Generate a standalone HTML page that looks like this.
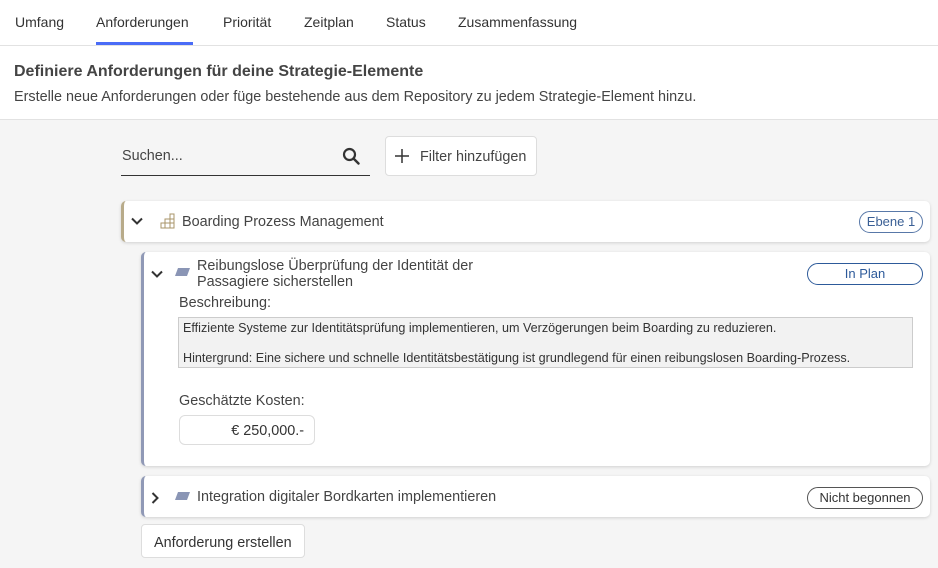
<!DOCTYPE html>
<html><head><style>
*{box-sizing:border-box;margin:0;padding:0}
body{width:938px;height:568px;overflow:hidden;background:#f5f5f5;font-family:"Liberation Sans",sans-serif;color:#333;position:relative}
.a{position:absolute}
.hdr{left:0;top:0;width:938px;height:120px;background:#fff;border-bottom:1px solid #e2e2e2}
.tab{top:14px;font-size:14px;color:#333}
.card{background:#fff;border-radius:5px;box-shadow:0 1px 3px rgba(0,0,0,.15)}
.pill{border:1px solid #2d5a9a;border-radius:12px;color:#2d5a9a;font-size:13px;text-align:center;height:22px;line-height:20px}
.t{font-size:14.4px;color:#444}
</style></head><body>
<div class="a hdr"></div>
<div class="a" style="left:0;top:45px;width:938px;height:1px;background:#e2e2e2"></div>
<div class="a tab" style="left:15px">Umfang</div>
<div class="a tab" style="left:96px">Anforderungen</div>
<div class="a" style="left:96px;top:42px;width:97px;height:3px;background:#4a6cf7"></div>
<div class="a tab" style="left:223px">Priorität</div>
<div class="a tab" style="left:304px">Zeitplan</div>
<div class="a tab" style="left:386px">Status</div>
<div class="a tab" style="left:458px">Zusammenfassung</div>
<div class="a" style="left:14px;top:63px;font-size:16px;font-weight:bold;color:#444">Definiere Anforderungen für deine Strategie-Elemente</div>
<div class="a t" style="left:14px;top:89px">Erstelle neue Anforderungen oder füge bestehende aus dem Repository zu jedem Strategie-Element hinzu.</div>

<div class="a t" style="left:122px;top:148px">Suchen...</div>
<svg class="a" style="left:342px;top:147px" width="18" height="18" viewBox="0 0 18 18"><circle cx="7.5" cy="7.5" r="5.5" fill="none" stroke="#333" stroke-width="2.2"/><path d="M11.5 11.5L16.5 16.5" stroke="#333" stroke-width="2.4" stroke-linecap="round"/></svg>
<div class="a" style="left:121px;top:175px;width:249px;height:1px;background:#333"></div>
<div class="a" style="left:385px;top:136px;width:152px;height:40px;background:#fff;border:1px solid #ddd;border-radius:4px"></div>
<svg class="a" style="left:395px;top:149px" width="14" height="14"><path d="M7 0v14M0 7h14" stroke="#333" stroke-width="1.5"/></svg>
<div class="a t" style="left:420px;top:149px">Filter hinzufügen</div>

<div class="a card" style="left:121px;top:201px;width:809px;height:41px;border-left:3px solid #b8ab8a"></div>
<svg class="a" style="left:131px;top:217px" width="12" height="9"><path d="M1 1.5l5 5 5-5" fill="none" stroke="#333" stroke-width="2"/></svg>
<svg class="a" style="left:160px;top:213px" width="15" height="16" viewBox="0 0 15 16"><path d="M10 1h4v14H1v-5h4V6h5z M5 10h9 M10 6h4 M5 10v5 M10 6v9" fill="none" stroke="#a8946a" stroke-width="1"/></svg>
<div class="a t" style="left:182px;top:214px">Boarding Prozess Management</div>
<div class="a pill" style="left:859px;top:211px;width:64px;color:#3a5f95;border-color:#5878a8">Ebene 1</div>

<div class="a card" style="left:141px;top:252px;width:789px;height:214px;border-left:3px solid #9099b6"></div>
<svg class="a" style="left:151px;top:270px" width="12" height="9"><path d="M1 1.5l5 5 5-5" fill="none" stroke="#333" stroke-width="2"/></svg>
<svg class="a" style="left:175px;top:268px" width="15" height="8"><path d="M3 0h12l-3 8H0z" fill="#8a95b5"/></svg>
<div class="a t" style="left:197px;top:258px;line-height:16px">Reibungslose Überprüfung der Identität der<br>Passagiere sicherstellen</div>
<div class="a pill" style="left:807px;top:263px;width:116px">In Plan</div>
<div class="a t" style="left:179px;top:295px">Beschreibung:</div>
<div class="a" style="left:178px;top:317px;width:735px;height:51px;background:#f2f2f2;border:1px solid #ccc;font-size:12.6px;color:#333;padding:3px 4px;line-height:15px">Effiziente Systeme zur Identitätsprüfung implementieren, um Verzögerungen beim Boarding zu reduzieren.<div style="margin-top:15px">Hintergrund: Eine sichere und schnelle Identitätsbestätigung ist grundlegend für einen reibungslosen Boarding-Prozess.</div></div>
<div class="a t" style="left:179px;top:393px">Geschätzte Kosten:</div>
<div class="a t" style="left:179px;top:415px;width:136px;height:30px;border:1px solid #ddd;border-radius:6px;color:#333;text-align:right;padding:7px 10px 0 0">€ 250,000.-</div>

<div class="a card" style="left:141px;top:476px;width:789px;height:41px;border-left:3px solid #9099b6"></div>
<svg class="a" style="left:151px;top:492px" width="9" height="12"><path d="M1.5 1l5 5-5 5" fill="none" stroke="#333" stroke-width="2"/></svg>
<svg class="a" style="left:175px;top:492px" width="15" height="8"><path d="M3 0h12l-3 8H0z" fill="#8a95b5"/></svg>
<div class="a t" style="left:197px;top:489px">Integration digitaler Bordkarten implementieren</div>
<div class="a pill" style="left:807px;top:487px;width:116px;border-color:#555;color:#333">Nicht begonnen</div>

<div class="a t" style="left:141px;top:524px;width:164px;height:34px;background:#fff;border:1px solid #ddd;border-radius:4px;color:#333;padding:10px 0 0 12px">Anforderung erstellen</div>
</body></html>
